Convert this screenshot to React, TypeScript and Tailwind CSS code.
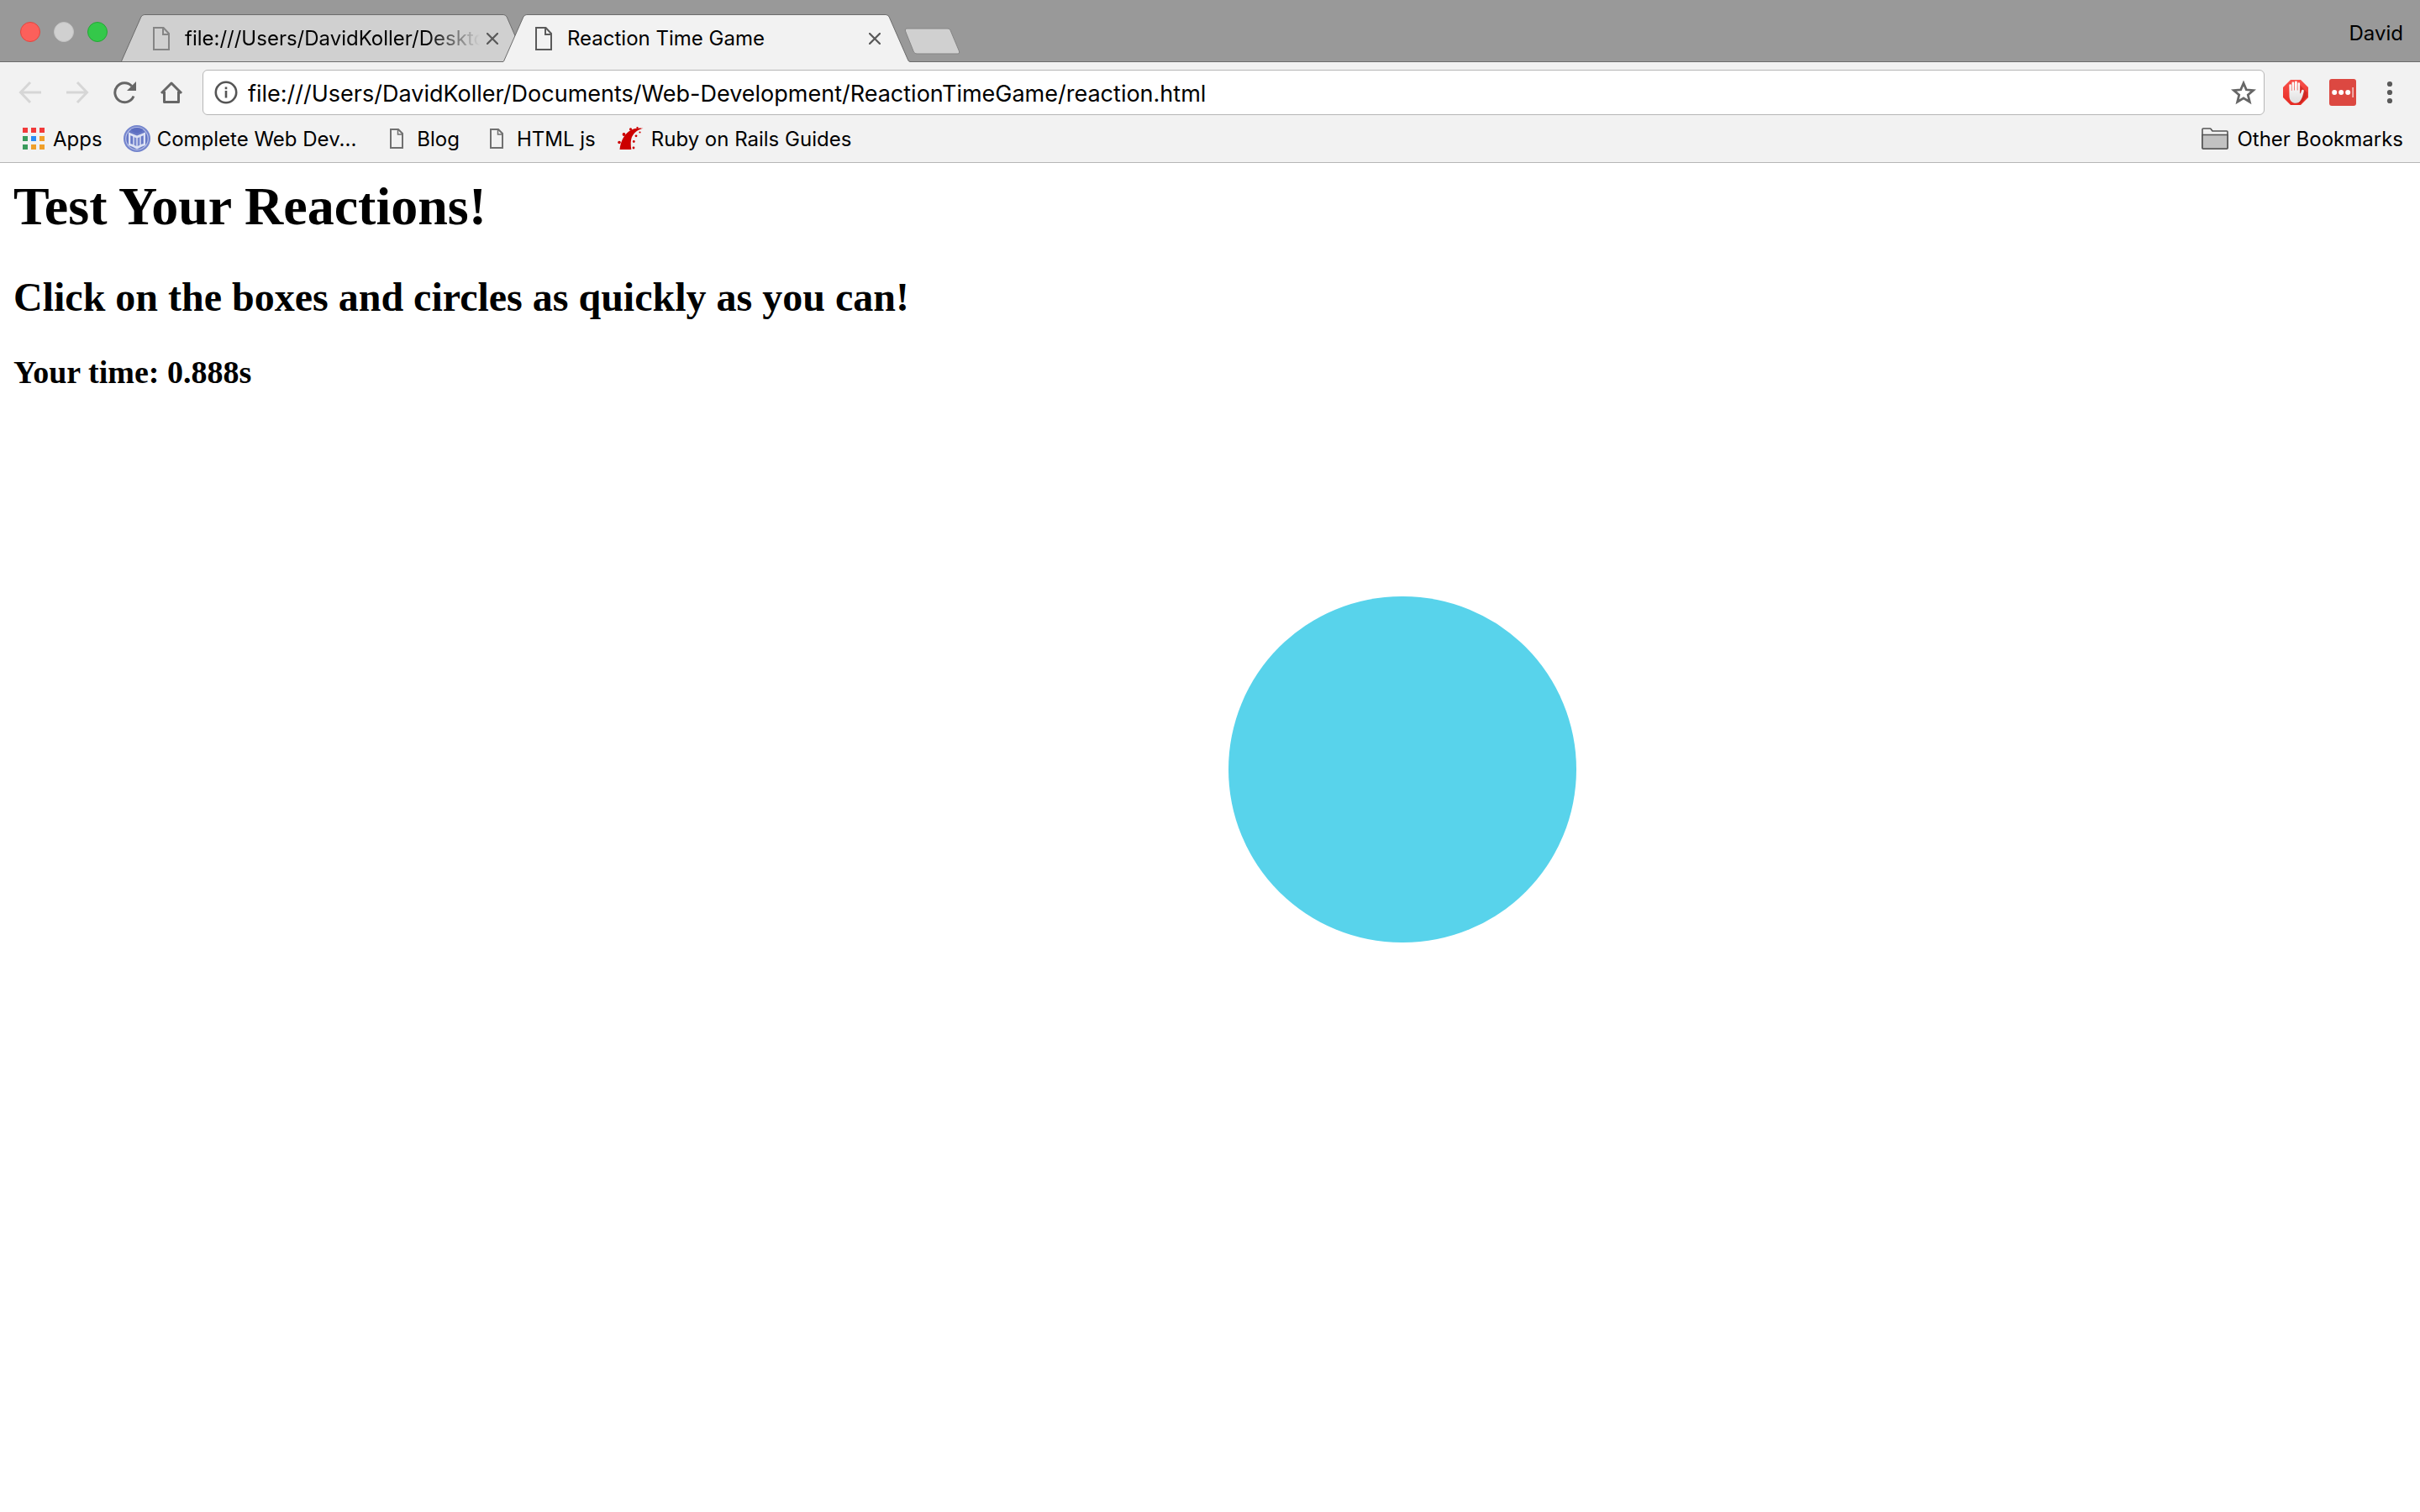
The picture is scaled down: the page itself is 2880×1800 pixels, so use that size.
import type { ReactNode } from 'react';

function FileIcon({ className }: { className: string }) {
  return (
    <svg viewBox="0 0 20 28" fill="none" stroke="currentColor" strokeWidth="2" className={className} aria-hidden="true">
      <path d="M1 1h11.500L19 8v19H1z" />
      <path d="M12 1v8h7" />
    </svg>
  );
}

function SmallFileIcon() {
  return (
    <svg viewBox="0 0 16 24" fill="none" stroke="currentColor" strokeWidth="2" className="mr-4 h-6 w-4 text-[#707070]" aria-hidden="true">
      <path d="M1 1h9l5 5v17H1z" />
      <path d="M9.500 1v6H15" strokeWidth="1.500" />
    </svg>
  );
}

function Tab({ title, active = false }: { title: string; active?: boolean }) {
  return (
    <div className={active ? 'relative z-10 -ml-[29px] flex h-[57px] w-[484px] items-center pl-[38px] pr-[35px]' : 'relative flex h-[57px] w-[484px] items-center pl-[38px] pr-[35px]'}>
      <svg viewBox="0 0 486 57" preserveAspectRatio="none" className="absolute inset-0 size-full" aria-hidden="true">
        <path
          d="M0 57L1 55 24 3Q25.500 .5 28 .5H457Q459.500 .5 461 3L483 53Q484 56.500 486 56.500V57Z"
          fill={active ? '#f2f2f2' : '#d0d0d0'}
        />
        <path d="M.5 56L24 3Q25.500 .5 28 .5H457Q459.500 .5 461 3L483 53Q484 56.500 486 56.500" fill="none" stroke="#6b6b6b" strokeWidth="1" />
        {!active && <path d="M0 56.500H486" stroke="#6b6b6b" strokeWidth="1" />}
      </svg>
      <button role="tab" aria-selected={active} className="relative flex min-w-0 flex-1 items-center gap-[18px] text-left">
        <FileIcon className={active ? 'h-7 w-5 shrink-0 text-[#5a5a5a]' : 'h-7 w-5 shrink-0 text-[#858585]'} />
        <span className={active ? 'overflow-hidden whitespace-nowrap' : 'overflow-hidden whitespace-nowrap [mask-image:linear-gradient(to_right,black_82%,transparent_100%)]'}>
          {title}
        </span>
      </button>
      <button aria-label="Close tab" className="relative ml-2 text-[#5a5a5a]">
        <svg viewBox="0 0 14 14" fill="none" stroke="currentColor" strokeWidth="2.300" strokeLinecap="round" className="size-3.5">
          <path d="M1 1l12 12M13 1L1 13" />
        </svg>
      </button>
    </div>
  );
}

function Bookmark({ icon, children }: { icon: ReactNode; children: ReactNode }) {
  return (
    <a href="#" className="flex items-center whitespace-nowrap">
      {icon}
      <span className="pt-0.5">{children}</span>
    </a>
  );
}

const APP_COLORS = ['#f23a3a', '#f23a3a', '#f23a3a', '#3a9b5c', '#2a8cf5', '#f0a02a', '#3a9b5c', '#f0a02a', '#f0a02a'];

function AppsIcon() {
  return (
    <svg viewBox="0 0 26 26" className="mr-[10px] size-[26px]" aria-hidden="true">
      {APP_COLORS.map((color, i) => (
        <rect key={i} x={(i % 3) * 10} y={Math.floor(i / 3) * 10} width="6" height="6" fill={color} />
      ))}
    </svg>
  );
}

function CourseIcon() {
  return (
    <svg viewBox="0 0 32 32" className="mr-2 size-8" aria-hidden="true">
      <circle cx="16" cy="16" r="16" fill="#7485cd" />
      <circle cx="16" cy="16" r="13.300" fill="#6678c6" stroke="#b4bde5" strokeWidth="1.300" />
      <path d="M8.500 5Q16 .8 23.500 5L21 8l-5 1.500L11 8z" fill="#5b6dc0" />
      <path d="M6 8.500L16 12.500l10-4V24l-4 1.500-6 3-6-3L6 24z" fill="#dde2f4" />
      <path d="M8.300 12.200l2.900 1.200V23l-2.900-1zM23.700 12.200l-2.900 1.200V23l2.900-1z" fill="#6678c6" />
      <path d="M12.600 14.200l2.700 1V25l-2.700-1.200zM19.400 14.200l-2.700 1V25l2.700-1.200z" fill="#7a8ad0" />
    </svg>
  );
}

function RailsIcon() {
  return (
    <svg viewBox="0 0 32 28" className="mr-2 h-7 w-8" fill="#cc0000" aria-hidden="true">
      <path d="M2.500 27C3.500 18 7 10 14 5 19 1.500 25 .8 30.500 1.800 24 3 19.500 7 17 12 15.300 16.500 15.500 22 16.300 27z" />
      <circle cx="2" cy="18.500" r="1.800" />
      <circle cx="7.500" cy="9" r="1.900" />
      <circle cx="15.500" cy="2.800" r="1.600" />
      <circle cx="23.500" cy="1" r="1.100" />
      <circle cx="26.500" cy="6.500" r="1.100" />
      <circle cx="22" cy="10.800" r="1.400" />
      <circle cx="19.300" cy="17.500" r="1.400" />
      <circle cx="19" cy="25" r="1.400" />
    </svg>
  );
}

function FolderIcon() {
  return (
    <svg viewBox="0 0 32 26" className="mr-[10px] h-[26px] w-8" stroke="#555" strokeWidth="1.600" strokeLinejoin="round" aria-hidden="true">
      <path d="M1 24V2Q1 1 2 1H10Q11 1 11.500 2L13 4H30Q31 4 31 5V24Q31 25 30 25H2Q1 25 1 24Z" fill="#f0f0f0" />
      <path d="M1 8.500H31V24Q31 25 30 25H2Q1 25 1 24Z" fill="#c2c2c2" />
    </svg>
  );
}

function Hand() {
  return (
    <svg viewBox="0 0 30 30" className="size-[30px]" aria-hidden="true">
      <defs>
        <linearGradient id="stop-red" x1="0" y1="0" x2="0" y2="1">
          <stop offset="0" stopColor="#f8514b" />
          <stop offset="1" stopColor="#e62a22" />
        </linearGradient>
        <linearGradient id="palm" x1="0" y1="0" x2="0" y2="1">
          <stop offset="0" stopColor="#ffffff" />
          <stop offset="1" stopColor="#dedede" />
        </linearGradient>
      </defs>
      <path d="M9 0H21L30 9V21L21 30H9L0 21V9Z" fill="url(#stop-red)" />
      <path d="M20 6L25 11.500 28.500 15V20L21 28H15z" fill="#b81d17" opacity=".55" />
      <path
        d="M7.300 6.500a1.300 1.300 0 0 1 2.600 0V13h.6V4a1.400 1.400 0 0 1 2.800 0v8.500h.7V3a1.400 1.400 0 0 1 2.800 0v9.500h.7V4.500a1.300 1.300 0 0 1 2.600 0V16.500q1-.4 1.500-2.300c.5-1.800 1-2.600 2-2.400 1.200.2 1.400 1.100 1 2.600-.8 3.500-1.800 7-3.400 9.600-1.600 2.700-3.500 3.800-6 3.800-4.500 0-7.400-3-7.700-7.800z"
        fill="url(#palm)"
      />
    </svg>
  );
}

export default function App() {
  return (
    <div className="flex min-h-screen flex-col bg-white text-black">
      <header className="border-b border-[#b6b6b6] bg-[#f2f2f2] font-['Inter',sans-serif] text-[24px] leading-[30px]">
        <div className="flex h-[74px] items-end bg-[#999999] pl-6 pr-5 shadow-[inset_0_-1px_0_#6b6b6b]">
          <div className="mb-6 flex gap-4">
            <button aria-label="Close window" className="size-6 rounded-full border border-[#e2463f] bg-[#fc605b]" />
            <button aria-label="Minimize window" className="size-6 rounded-full border border-[#c2c2c2] bg-[#d0d0d0]" />
            <button aria-label="Zoom window" className="size-6 rounded-full border border-[#24a835] bg-[#34c84a]" />
          </div>
          <div role="tablist" className="ml-4 flex">
            <Tab title="file:///Users/DavidKoller/Desktop" />
            <Tab title="Reaction Time Game" active />
          </div>
          <button aria-label="New tab" className="relative -ml-2 mb-2">
            <svg viewBox="0 0 68 34" className="h-[34px] w-[68px]" aria-hidden="true">
              <path d="M4 2H53Q55 2 56 4L66.500 29Q67.500 32 65 32H16Q14 32 12.500 30L2.500 5Q1.500 2 4 2Z" fill="#d0d0d0" stroke="#858585" strokeWidth="1" />
            </svg>
          </button>
          <button className="mb-[19px] ml-auto">David</button>
        </div>

        <div className="flex h-[72px] items-center pl-[22px] pr-6 text-[#666666]">
          <div className="flex gap-7">
            <button aria-label="Back" className="text-[#d6d6d6]">
              <svg viewBox="0 0 28 28" fill="none" stroke="currentColor" strokeWidth="3" className="size-7">
                <path d="M14 2L2.500 14 14 26M3 14H27" />
              </svg>
            </button>
            <button aria-label="Forward" className="text-[#d6d6d6]">
              <svg viewBox="0 0 28 28" fill="none" stroke="currentColor" strokeWidth="3" className="size-7">
                <path d="M14 2L25.500 14 14 26M1 14H25" />
              </svg>
            </button>
            <button aria-label="Reload">
              <svg viewBox="0 0 28 28" fill="none" stroke="currentColor" strokeWidth="3" className="size-7">
                <path d="M22.800 6.500A11.500 11.500 0 1 0 25 18.500" />
                <path d="M28 1V12H17z" fill="currentColor" stroke="none" />
              </svg>
            </button>
            <button aria-label="Home">
              <svg viewBox="0 0 28 28" fill="none" stroke="currentColor" strokeWidth="3" className="size-7">
                <path d="M2 15L14 3 26 15M5.500 13V25.500H22.500V13" strokeLinejoin="round" />
              </svg>
            </button>
          </div>
          <div className="ml-[23px] flex h-[54px] flex-1 items-center rounded-md border border-[#b6b6b6] bg-white pl-[13px] pr-2">
            <button aria-label="View site information">
              <svg viewBox="0 0 28 28" fill="none" stroke="#555555" strokeWidth="2.600" className="size-7">
                <circle cx="14" cy="14" r="12.200" />
                <path d="M14 12V20.500M14 7.500V10.200" />
              </svg>
            </button>
            <input
              type="text"
              aria-label="Address"
              defaultValue="file:///Users/DavidKoller/Documents/Web-Development/ReactionTimeGame/reaction.html"
              className="ml-3 min-w-0 flex-1 bg-transparent pt-[3px] text-[27px] leading-[34px] text-black outline-none"
            />
            <button aria-label="Bookmark this page">
              <svg viewBox="0 0 32 30" fill="none" stroke="currentColor" strokeWidth="2.800" className="h-[30px] w-8">
                <path d="M16 4L19.300 11.800 27.600 12.500 21.300 18 23.300 26.200 16 21.800 8.700 26.200 10.700 18 4.400 12.500 12.700 11.800Z" />
              </svg>
            </button>
          </div>
          <button aria-label="AdBlock" className="ml-[22px]">
            <Hand />
          </button>
          <button aria-label="LastPass" className="ml-[25px]">
            <svg viewBox="0 0 32 32" className="size-8">
              <rect width="32" height="32" rx="3" fill="#dc4841" />
              <g fill="#ffffff">
                <circle cx="6.200" cy="16" r="3" />
                <circle cx="14.200" cy="16" r="3" />
                <circle cx="22.200" cy="16" r="3" />
              </g>
              <rect x="27.300" y="10" width="1.700" height="12" fill="#f3bbb8" />
            </svg>
          </button>
          <button aria-label="Menu" className="ml-7">
            <svg viewBox="0 0 24 28" fill="#5a5a5a" className="h-7 w-6">
              <circle cx="12" cy="4" r="3.100" />
              <circle cx="12" cy="14" r="3.100" />
              <circle cx="12" cy="24" r="3.100" />
            </svg>
          </button>
        </div>

        <nav aria-label="Bookmarks" className="flex h-[47px] items-center pb-[9px] pl-[27px] pr-5">
          <Bookmark icon={<AppsIcon />}>Apps</Bookmark>
          <div className="ml-[25px] flex">
            <Bookmark icon={<CourseIcon />}>Complete Web Dev...</Bookmark>
          </div>
          <div className="ml-10 flex gap-9">
            <Bookmark icon={<SmallFileIcon />}>Blog</Bookmark>
            <Bookmark icon={<SmallFileIcon />}>HTML js</Bookmark>
          </div>
          <div className="ml-[26px] flex">
            <Bookmark icon={<RailsIcon />}>Ruby on Rails Guides</Bookmark>
          </div>
          <div className="ml-auto flex">
            <Bookmark icon={<FolderIcon />}>Other Bookmarks</Bookmark>
          </div>
        </nav>
      </header>

      <main className="relative flex-1 px-4 pt-4 font-['Liberation_Serif',serif] font-bold">
        <h1 className="text-[64px] leading-[72px]">Test Your Reactions!</h1>
        <h2 className="mt-[45px] text-[48px] leading-[54px]">Click on the boxes and circles as quickly as you can!</h2>
        <h3 className="mt-[42px] text-[38px] leading-[40px]">Your time: 0.888s</h3>
        <button aria-label="Target" className="absolute left-[1462px] top-[516px] h-[412px] w-[414px] rounded-full bg-[#58d3eb]" />
      </main>
    </div>
  );
}
